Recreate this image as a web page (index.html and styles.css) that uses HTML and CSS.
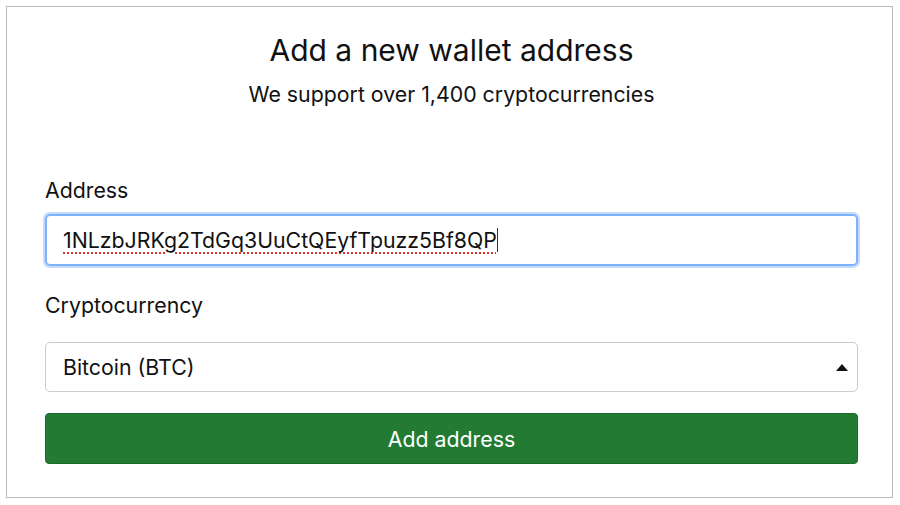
FILE: index.html
```html
<!DOCTYPE html>
<html>
<head>
<meta charset="utf-8">
<title>Add a new wallet address</title>
<link rel="stylesheet" href="styles.css">
</head>
<body>
	<div class="card">
		<h1 class="title">Add a new wallet address</h1>
		<p class="sub">We support over 1,400 cryptocurrencies</p>

		<form class="form">
			<div class="group">
				<label class="label">Address</label>
				<div class="field focus">
					<span class="typo">1NLzbJRKg2TdGq3UuCtQEyfTpuzz5Bf8QP</span><span class="caret"></span>
				</div>
			</div>
			<div class="group">
				<label class="label">Cryptocurrency</label>
				<div class="select">
					<span>Bitcoin (BTC)</span>
					<span class="arrow"></span>
				</div>
			</div>
			<button type="button" class="btn">Add address</button>
		</form>
	</div>
</body>
</html>
```

FILE: styles.css
```css
* { margin: 0; padding: 0; box-sizing: border-box; }
body { font-family: Inter, "Liberation Sans", Arial, sans-serif; color: #111; background: #fff; padding: 6px 7px 7px 6px; }

.card { border: 1px solid #bbb; height: 492px; padding: 23px 34px 0 38px; }
.title { font-size: 30px; font-weight: normal; text-align: center; line-height: 40px; }
.sub { font-size: 21.3px; text-align: center; line-height: 30px; margin-top: 9px; }

.form { margin-top: 67px; }
.group + .group { margin-top: 25px; }
.label { display: block; font-size: 21.3px; line-height: 28px; margin-bottom: 10px; }

.field { height: 52px; border: 1px solid #ccc; border-radius: 5px; padding: 0 16px; font-size: 21.3px; display: flex; align-items: center; }
.field.focus { border: 2px solid #7fb2f8; box-shadow: 0 0 0 2px #c3dcfd; }
.typo { text-decoration: underline dotted #e0312e; text-underline-offset: 4px; text-decoration-thickness: 2px; }
.caret { display: inline-block; width: 1px; height: 24px; background: #333; }

.select { height: 50px; border: 1px solid #ccc; border-radius: 5px; padding: 0 9px 0 17px; font-size: 21.3px; display: flex; align-items: center; justify-content: space-between; margin-top: 23px; }
.arrow { width: 0; height: 0; border-left: 6px solid transparent; border-right: 6px solid transparent; border-bottom: 7px solid #111; }

.btn { display: block; width: 100%; height: 51px; margin-top: 21px; border: 1px solid #1b6a2a; border-radius: 4px; background: #227a33; color: #fff; font-family: inherit; font-size: 21.3px; }
```
